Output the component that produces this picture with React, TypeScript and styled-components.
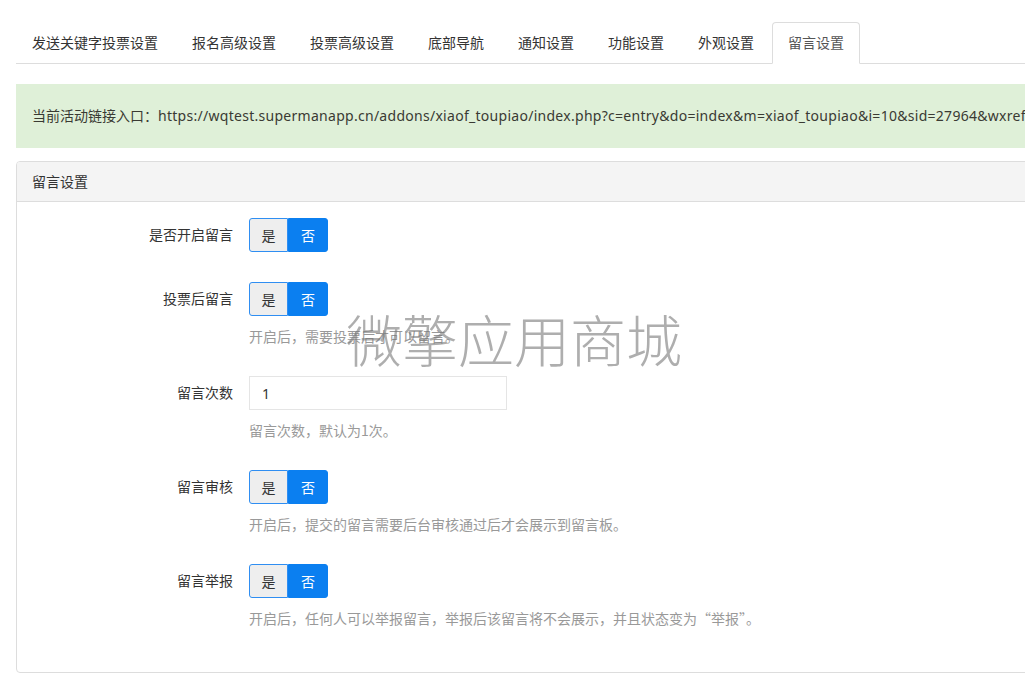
import React from "react";
import styled, { createGlobalStyle } from "styled-components";

const GlobalStyle = createGlobalStyle`
  html, body {
    margin: 0;
    padding: 0;
    background: #ffffff;
    overflow: hidden;
  }
  body {
    font-family: "Noto Sans", "Noto Sans CJK SC", sans-serif;
    font-size: 14px;
    color: #333333;
  }
  * { box-sizing: border-box; }
`;

const Page = styled.div`
  position: relative;
  width: 1200px;
  padding: 22px 0 0 16px;
`;

const TabBar = styled.ul`
  display: flex;
  margin: 0;
  padding: 0;
  list-style: none;
  border-bottom: 1px solid #dddddd;
`;

const Tab = styled.li<{ $active?: boolean }>`
  margin: 0 2px -1px 0;
  padding: 10px 15px;
  line-height: 20px;
  font-size: 14px;
  white-space: nowrap;
  color: ${(p) => (p.$active ? "#555555" : "#333333")};
  background: ${(p) => (p.$active ? "#ffffff" : "transparent")};
  border: 1px solid ${(p) => (p.$active ? "#dddddd" : "transparent")};
  border-bottom-color: ${(p) => (p.$active ? "#ffffff" : "transparent")};
  border-radius: 4px 4px 0 0;
`;

const Alert = styled.div`
  margin-top: 20px;
  padding: 21px 15px;
  line-height: 20px;
  background: #dff0d8;
  border: 1px solid #dff0d8;
  color: #3a3a33;
  white-space: nowrap;
  overflow: hidden;
`;

const Url = styled.span`
  letter-spacing: 0.28px;
`;

const Panel = styled.div`
  margin-top: 13px;
  border: 1px solid #dddddd;
  border-radius: 4px;
  background: #ffffff;
`;

const PanelHeading = styled.div`
  padding: 10px 15px 9px;
  line-height: 20px;
  background: #f4f4f4;
  border-bottom: 1px solid #dddddd;
  border-radius: 3px 3px 0 0;
  color: #333333;
`;

const PanelBody = styled.div`
  padding: 16px 15px 14px;
`;

const FormRow = styled.div`
  display: grid;
  grid-template-columns: 201px 1fr;
  column-gap: 16px;
  margin-bottom: 30px;
`;

const Label = styled.label`
  text-align: right;
  line-height: 34px;
  color: #333333;
`;

const Control = styled.div`
  display: flex;
  flex-direction: column;
  align-items: flex-start;
`;

const Toggle = styled.div`
  display: inline-flex;
  height: 34px;
`;

const ToggleOption = styled.span<{ $on?: boolean }>`
  display: flex;
  align-items: center;
  justify-content: center;
  height: 34px;
  padding: 0 12px;
  font-size: 14px;
  color: ${(p) => (p.$on ? "#ffffff" : "#333333")};
  background: ${(p) => (p.$on ? "#0b7ff0" : "#eeeeee")};
  border: 1px solid ${(p) => (p.$on ? "#0b7ff0" : "#2f8ef2")};
  border-radius: ${(p) => (p.$on ? "0 3px 3px 0" : "3px 0 0 3px")};
  width: ${(p) => (p.$on ? "40px" : "39px")};
`;

const TextInput = styled.input`
  width: 258px;
  height: 34px;
  padding: 6px 12px;
  font-family: inherit;
  font-size: 14px;
  color: #333333;
  border: 1px solid #e5e5e5;
  border-radius: 0;
  outline: none;
`;

const Help = styled.div`
  margin-top: 10px;
  line-height: 20px;
  font-family: "Noto Sans CJK SC", sans-serif;
  font-size: 14px;
  color: #999999;
  white-space: nowrap;
`;

const Watermark = styled.div`
  position: absolute;
  left: 346px;
  top: 306px;
  font-family: "Noto Sans CJK SC", sans-serif;
  font-size: 56px;
  font-weight: 300;
  line-height: 64px;
  color: rgba(120, 120, 120, 0.6);
  white-space: nowrap;
  pointer-events: none;
`;

const tabs = [
  "发送关键字投票设置",
  "报名高级设置",
  "投票高级设置",
  "底部导航",
  "通知设置",
  "功能设置",
  "外观设置",
  "留言设置",
];

const YesNo: React.FC = () => (
  <Toggle>
    <ToggleOption>是</ToggleOption>
    <ToggleOption $on>否</ToggleOption>
  </Toggle>
);

export default function App() {
  return (
    <>
      <GlobalStyle />
      <Page>
        <TabBar>
          {tabs.map((t, i) => (
            <Tab key={t} $active={i === tabs.length - 1}>
              {t}
            </Tab>
          ))}
        </TabBar>
        <Alert>
          当前活动链接入口：
          <Url>
            https://wqtest.supermanapp.cn/addons/xiaof_toupiao/index.php?c=entry&amp;do=index&amp;m=xiaof_toupiao&amp;i=10&amp;sid=27964&amp;wxref=mp.weixin.qq.com#wechat_redirect
          </Url>
        </Alert>
        <Panel>
          <PanelHeading>留言设置</PanelHeading>
          <PanelBody>
            <FormRow>
              <Label>是否开启留言</Label>
              <Control>
                <YesNo />
              </Control>
            </FormRow>
            <FormRow>
              <Label>投票后留言</Label>
              <Control>
                <YesNo />
                <Help>开启后，需要投票后才可以留言。</Help>
              </Control>
            </FormRow>
            <FormRow>
              <Label>留言次数</Label>
              <Control>
                <TextInput defaultValue="1" />
                <Help>留言次数，默认为1次。</Help>
              </Control>
            </FormRow>
            <FormRow>
              <Label>留言审核</Label>
              <Control>
                <YesNo />
                <Help>开启后，提交的留言需要后台审核通过后才会展示到留言板。</Help>
              </Control>
            </FormRow>
            <FormRow>
              <Label>留言举报</Label>
              <Control>
                <YesNo />
                <Help>开启后，任何人可以举报留言，举报后该留言将不会展示，并且状态变为“举报”。</Help>
              </Control>
            </FormRow>
          </PanelBody>
        </Panel>
        <Watermark>微擎应用商城</Watermark>
      </Page>
    </>
  );
}
